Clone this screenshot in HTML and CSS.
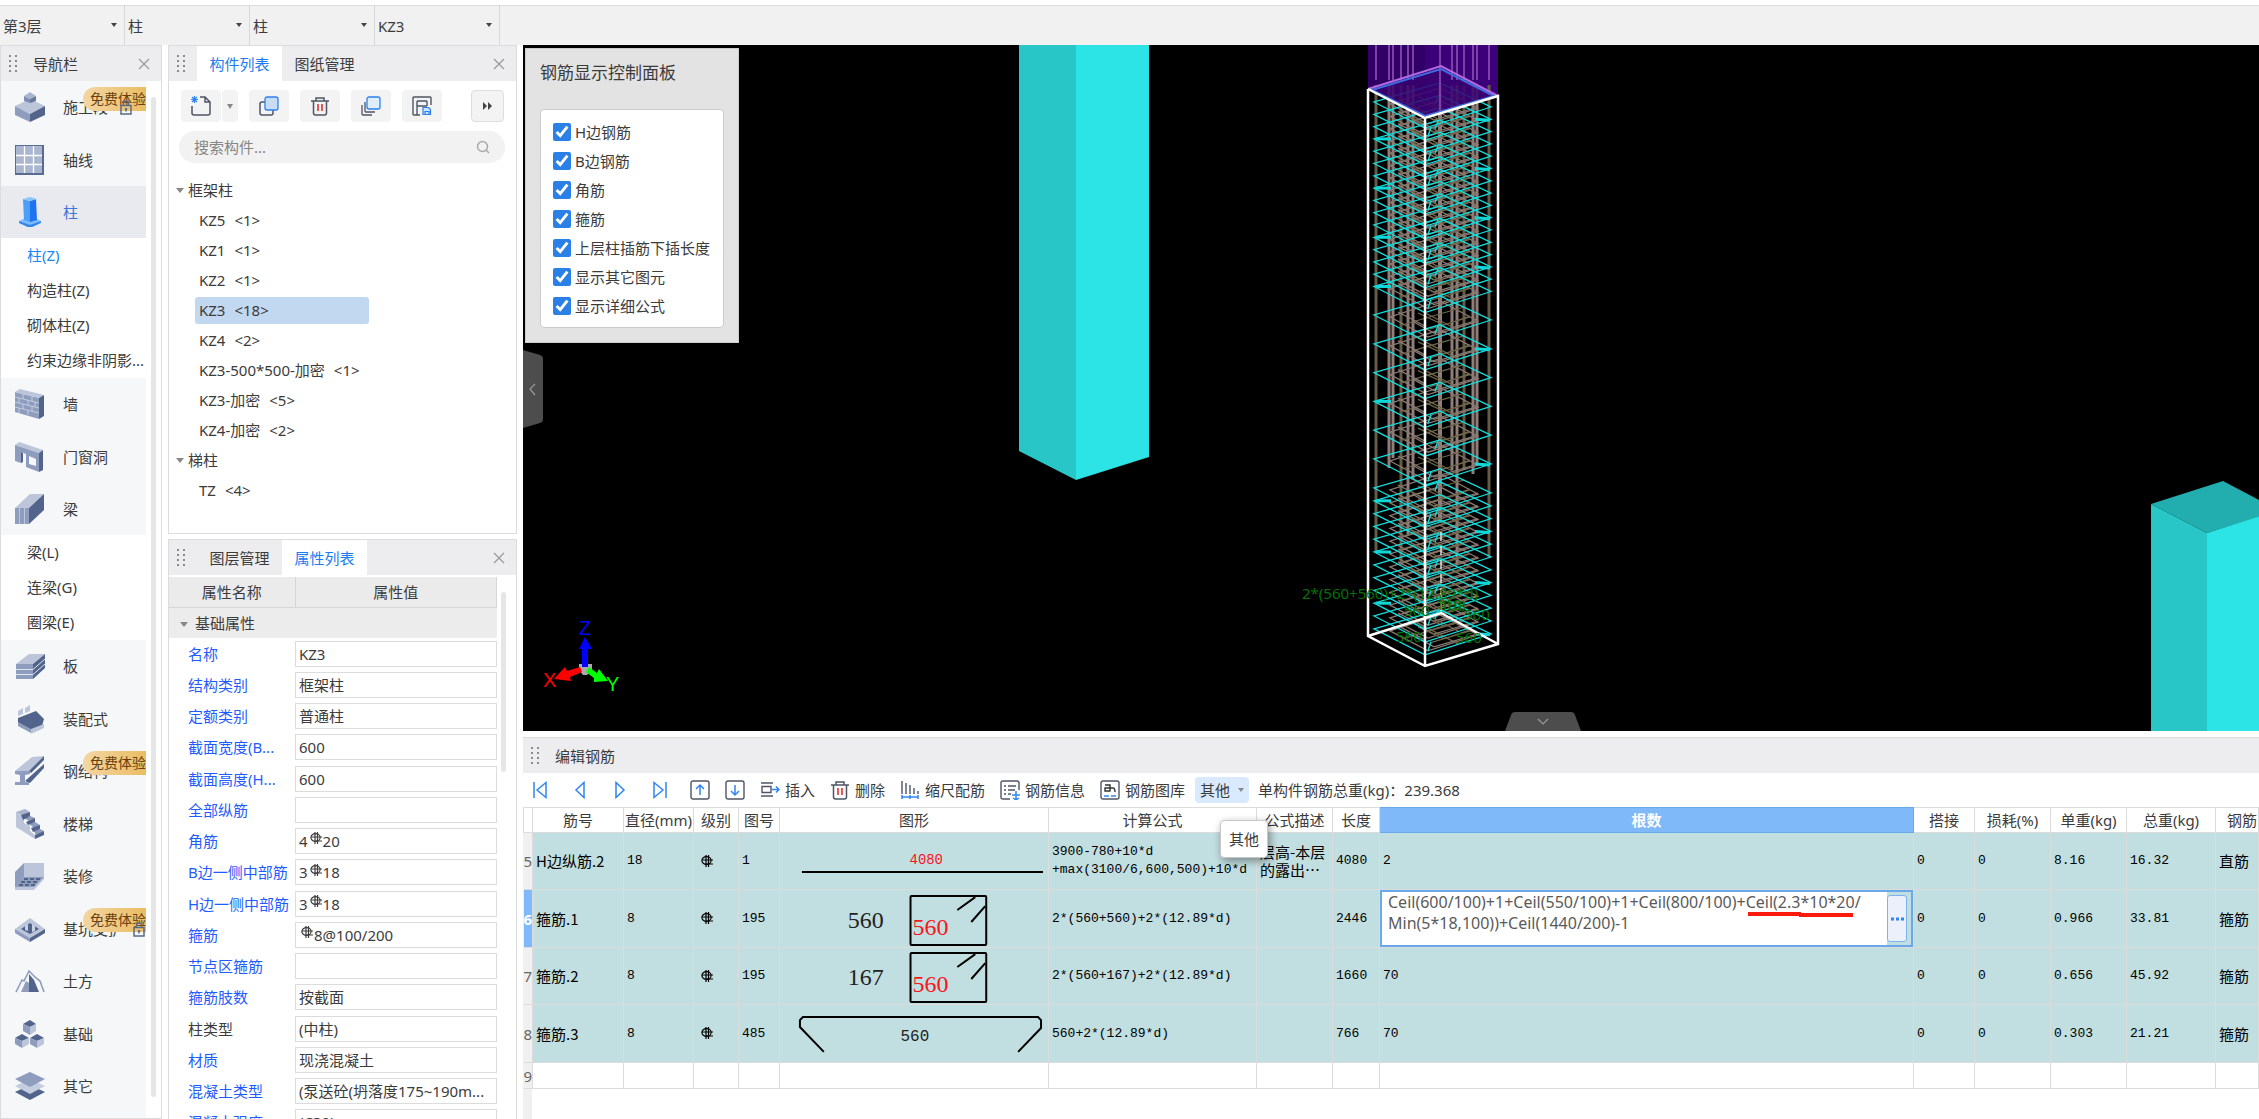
FILE: index.html
```html
<!DOCTYPE html>
<html lang="zh-CN">
<head>
    <meta charset="UTF-8">
    <meta name="viewport" content="width=device-width, initial-scale=1.0">
    <title>编辑钢筋</title>
    <link rel="stylesheet" href="styles.css">
</head>
<body>
    <!-- shared symbols -->
    <svg class="defs" width="0" height="0" aria-hidden="true">
        <symbol id="grip" viewBox="0 0 10 20">
            <path fill="#8a8a8a" d="M1 1h2v2H1zM7 1h2v2H7zM1 6h2v2H1zM7 6h2v2H7zM1 11h2v2H1zM7 11h2v2H7zM1 16h2v2H1zM7 16h2v2H7z"/>
        </symbol>
        <symbol id="close" viewBox="0 0 12 12">
            <path fill="none" stroke="#999" stroke-width="1.2" d="M1 1l10 10M11 1L1 11"/>
        </symbol>
        <symbol id="rebar" viewBox="0 0 12 13">
            <ellipse cx="5.500" cy="5.500" rx="4.600" ry="3.800" fill="none" stroke="currentColor" stroke-width="1.2"/>
            <path fill="none" stroke="currentColor" stroke-width="1.2" d="M5 0v12M7.500 0v12M1 5h11M5 9h7"/>
        </symbol>
        <symbol id="lock" viewBox="0 0 12 15">
            <path fill="none" stroke="#5a6b87" stroke-width="1.5" d="M1 5.500h10v8.500H1zM3.500 5V3a2.500 2 0 0 1 5 0v2M6 8v3.500M4.800 9h2.400"/>
        </symbol>
        <symbol id="trash" viewBox="0 0 20 20">
            <path fill="none" stroke="#4d5566" stroke-width="1.5" d="M1 5h18M6 5V2h8v3M3.500 5v12q0 2 2 2h9q2 0 2-2V5"/>
            <path stroke="#e43b3b" stroke-width="1.700" d="M8 8v7M12 8v7"/>
        </symbol>
        <symbol id="hook-box" viewBox="0 0 269 56">
            <g fill="none" stroke="#000" stroke-width="2" stroke-linejoin="round">
                <rect x="131" y="5" width="76" height="49" rx="1"/>
                <path d="M178 19l18-13M192 31l14-16"/>
            </g>
        </symbol>
    </svg>

    <div class="selectors">
        <div class="selector"><select aria-label="楼层"><option>第3层</option></select></div>
        <div class="selector"><select aria-label="构件大类"><option>柱</option></select></div>
        <div class="selector"><select aria-label="构件类型"><option>柱</option></select></div>
        <div class="selector"><select aria-label="构件"><option>KZ3</option></select></div>
    </div>

    <div class="workspace">
        <nav class="panel sidebar">
            <div class="panel-header">
                <svg class="grip"><use href="#grip"/></svg>
                <span class="panel-title">导航栏</span>
                <button class="close" aria-label="关闭"><svg><use href="#close"/></svg></button>
            </div>
            <div class="nav-body">
                <div class="nav-list">
                    <div class="nav-group">
                        <a class="nav-item" href="#">
                            <svg viewBox="0 0 30 30"><path fill="#bcc5da" d="M0 14l15-7 15 7-15 8z"/><path fill="#8e9cbe" d="M0 14l15 8v8L0 23z"/><path fill="#52648b" d="M30 14l-15 8v8l15-7z"/><path fill="#a9b5d0" d="M9 4l6-4 6 4-6 3z"/><path fill="#7f8fb5" d="M9 4l6 3v4L9 9z"/><path fill="#6878a0" d="M21 4l-6 3v4l6-2z"/></svg>
                            <span>施工段</span>
                            <em class="badge">免费体验</em>
                            <svg class="lock"><use href="#lock"/></svg>
                        </a>
                        <a class="nav-item" href="#">
                            <svg viewBox="0 0 30 30"><path fill="#5a6b93" d="M0 0h29v30H0z"/><path fill="#aab5cf" d="M1 1h26v27H1z"/><path fill="none" stroke="#fff" stroke-width="1.300" d="M9.500 1v27M18.500 1v27M1 10.500h26M1 19.500h26"/></svg>
                            <span>轴线</span>
                        </a>
                        <a class="nav-item active" href="#">
                            <svg viewBox="0 0 30 30"><path fill="#7dbcff" d="M4 24l11-5 11 5-11 5z"/><path fill="#2f86f0" d="M4 24l11 4 11-4v2l-11 5-11-5z"/><path fill="#4b9efa" d="M8 2l7 2v21l-6-2z"/><path fill="#1d74ee" d="M21 2l-6 2v21l7-2z"/><path fill="#8cc5ff" d="M8 2l7-2 7 2-7 2z"/></svg>
                            <span>柱</span>
                        </a>
                    </div>
                    <div class="nav-sub">
                        <a class="active" href="#">柱(Z)</a>
                        <a href="#">构造柱(Z)</a>
                        <a href="#">砌体柱(Z)</a>
                        <a href="#">约束边缘非阴影...</a>
                    </div>
                    <div class="nav-group">
                        <a class="nav-item" href="#">
                            <svg viewBox="0 0 30 30"><path fill="#8e9cbe" d="M0 3l24 6v21L0 23z"/><path fill="#bcc5da" d="M0 3l5-3 24 6-5 3z"/><path fill="#52648b" d="M29 6v21l-5 3V9z"/><path fill="none" stroke="#c3cbdd" stroke-width="1" d="M0 8l24 6M0 13l24 6M0 18l24 6M8 5v5M17 7v5M4 9v5M13 11v5M20 13v5M8 15v5M17 17v5M4 19v5M13 21v5"/></svg>
                            <span>墙</span>
                        </a>
                        <a class="nav-item" href="#">
                            <svg viewBox="0 0 30 30"><path fill="#bcc5da" d="M0 3l4-3 24 8-4 3z"/><path fill="#8e9cbe" fill-rule="evenodd" d="M0 3l24 8v19l-13-5V12l-5-2v11l-6-2zM14 14v8l7 2v-7z"/><path fill="#52648b" d="M28 8v20l-4 2V11zM6 10l2 1v9l-2 1z"/></svg>
                            <span>门窗洞</span>
                        </a>
                        <a class="nav-item" href="#">
                            <svg viewBox="0 0 30 30"><path fill="#bcc5da" d="M0 14L15 0h14L14 14z"/><path fill="#8e9cbe" d="M0 14h14v16H0z"/><path fill="#52648b" d="M29 0v16L14 30V14z"/><path stroke="#bcc5da" d="M4.500 14v16M9.500 14v16"/></svg>
                            <span>梁</span>
                        </a>
                    </div>
                    <div class="nav-sub">
                        <a href="#">梁(L)</a>
                        <a href="#">连梁(G)</a>
                        <a href="#">圈梁(E)</a>
                    </div>
                    <div class="nav-group">
                        <a class="nav-item" href="#">
                            <svg viewBox="0 0 30 30"><path fill="#bcc5da" d="M1 13L14 3h16L18 13z"/><path fill="#8e9cbe" d="M1 13h17v15H1z"/><path fill="#52648b" d="M30 3v14L18 28V13z"/><path fill="none" stroke="#dfe4ef" d="M1 18.500h17L30 8M1 23.500h17L30 13"/></svg>
                            <span>板</span>
                        </a>
                        <a class="nav-item" href="#">
                            <svg viewBox="0 0 30 30"><path fill="#52648b" d="M3 14l18-7 8 8-2 7-11 5-13-8z"/><path fill="#8e9cbe" d="M3 18l13 7v4L3 22z"/><path fill="#bcc5da" d="M16 25l13-5v4l-13 6zM3 7l5-3v6l-5 2zM10 4l5-3v6l-5 2z"/></svg>
                            <span>装配式</span>
                        </a>
                        <a class="nav-item" href="#">
                            <svg viewBox="0 0 30 30"><path fill="#bcc5da" d="M0 15L17 1l12-1-14 15z"/><path fill="#52648b" d="M29 0v4L16 17l-2-2zM10 25L29 8v4L15 27z"/><path fill="#8e9cbe" d="M0 15h15v3l-5 1v7h4v3H0v-3h5v-7l-5-1z"/></svg>
                            <span>钢结构</span>
                            <em class="badge">免费体验</em>
                        </a>
                        <a class="nav-item" href="#">
                            <svg viewBox="0 0 30 30"><path fill="#bcc5da" d="M1 3l8 6v5l6 3v5l5 4v4L1 18z"/><path fill="#a9b5d0" d="M1 3l9-3 5 3-8 4z"/><path fill="#8e9cbe" d="M9 9l6-2 5 2-6 3zM14 15l6-2 5 3-6 3zM19 22l6-2 4 2-8 4z"/><path fill="#52648b" d="M6 6l9-3v4L8 11zM11 13l9-4v4l-7 3zM16 19l9-3v4l-7 3zM20 26l9-4v4l-9 4z"/></svg>
                            <span>楼梯</span>
                        </a>
                        <a class="nav-item" href="#">
                            <svg viewBox="0 0 30 30"><path fill="#8e9cbe" d="M0 11l9-9v14L0 27z"/><path fill="#bcc5da" d="M9 2h20v14H9zM0 26h19L29 15v3L19 29H0z"/><path fill="#8e9cbe" d="M9 16h20L19 26H0z"/><path stroke="#3f5178" stroke-width="1.500" stroke-dasharray="4 2" d="M9 18h17M6 21h17M4 24h16"/></svg>
                            <span>装修</span>
                        </a>
                        <a class="nav-item" href="#">
                            <svg viewBox="0 0 30 30"><path fill="#bcc5da" d="M0 15L15 4l15 11-15 9z"/><path fill="#8e9cbe" d="M0 15l15 9v4L0 19z"/><path fill="#52648b" d="M30 15l-15 9v4l15-9zM6 15l9-6 9 6-9 5z"/><path fill="#c9d1e3" d="M10 12l3-2v7l-3-1zM17 10l3 2v5l-3 1z"/></svg>
                            <span>基坑支护</span>
                            <em class="badge">免费体验</em>
                            <svg class="lock lock-end"><use href="#lock"/></svg>
                        </a>
                        <a class="nav-item" href="#">
                            <svg viewBox="0 0 30 30"><path fill="#52648b" d="M14 8l5 6 5 12H14z"/><path fill="#8e9cbe" d="M6 26l5-11 3 2v9z"/><path fill="none" stroke="#8e9cbe" stroke-width="1.600" d="M1 26l6-12 2 1 5-10 7 7 4 3 4 11"/></svg>
                            <span>土方</span>
                        </a>
                        <a class="nav-item" href="#">
                            <svg viewBox="0 0 30 30"><path fill="#52648b" d="M8 5l7-4 6 4-6 3zM0 19l7-4 7 4-7 3zM15 19l7-4 7 4-7 3z"/><path fill="#8e9cbe" d="M8 5l7 3v8l-7-4zM0 19l7 3v7l-7-4zM15 19l7 3v7l-7-4z"/><path fill="#bcc5da" d="M21 5l-6 3v8l6-4zM14 19l-7 3v7l7-4zM29 19l-7 3v7l7-4z"/></svg>
                            <span>基础</span>
                        </a>
                        <a class="nav-item" href="#">
                            <svg viewBox="0 0 30 30"><path fill="#52648b" d="M0 21l15-7 15 7-15 8z"/><path fill="#c5cee0" d="M0 15l15-7 15 7-15 8z"/><path fill="#8e9cbe" d="M0 8l15-7 15 7-15 8z"/></svg>
                            <span>其它</span>
                        </a>
                    </div>
                </div>
                <div class="scrollbar"></div>
            </div>
        </nav>

        <div class="left-dock">
            <section class="panel">
                <div class="panel-header">
                    <svg class="grip"><use href="#grip"/></svg>
                    <div class="tabs">
                        <button class="tab active">构件列表</button>
                        <button class="tab">图纸管理</button>
                    </div>
                    <button class="close" aria-label="关闭"><svg><use href="#close"/></svg></button>
                </div>
                <div class="component-toolbar">
                    <div class="split">
                        <button aria-label="新建"><svg viewBox="0 0 20 20"><path fill="none" stroke="#4d5566" stroke-width="1.500" d="M9 1h5l5 5v11q0 2-2 2H3q-2 0-2-2v-7M14 1v5h5"/><path stroke="#2f86f0" stroke-width="1.200" d="M1 1l5 5M6 1L1 6M3.500 0v7M0 3.500h7"/></svg></button>
                        <button class="split-caret" aria-label="更多新建"><i class="caret"></i></button>
                    </div>
                    <button aria-label="复制"><svg viewBox="0 0 20 20"><rect x="1" y="6" width="13" height="13" rx="2" fill="none" stroke="#4d5566" stroke-width="1.500"/><rect x="6" y="1" width="13" height="13" rx="2" fill="#c8dcf8" stroke="#2f80ed" stroke-width="1.300"/></svg></button>
                    <button aria-label="删除"><svg><use href="#trash"/></svg></button>
                    <button aria-label="层间复制"><svg viewBox="0 0 20 20"><path fill="none" stroke="#4d5566" stroke-width="1.300" d="M4 6v9q0 1 1 1h9M1 9v9q0 1 1 1h9"/><rect x="6" y="1" width="13" height="12" rx="2" fill="#dfeeff" stroke="#2f80ed" stroke-width="1.300"/></svg></button>
                    <button aria-label="存档"><svg viewBox="0 0 20 20"><path fill="none" stroke="#4d5566" stroke-width="1.400" d="M8 19H2q-1 0-1-1V2q0-1 1-1h16q1 0 1 1v7M5 19V5M5 5h10M5 10h10M15 5v5"/><path fill="#cfe3ff" stroke="#2f80ed" stroke-width="1.200" d="M11 11.500h5.500l2 2v5H11zM13 18.500v-3h4v3"/></svg></button>
                    <button class="more" aria-label="更多"><svg viewBox="0 0 10 10"><path fill="#444" d="M0 1l4 4-4 4zM5 1l4 4-4 4z"/></svg></button>
                </div>
                <div class="search">
                    <input type="text" placeholder="搜索构件..." aria-label="搜索构件">
                    <svg viewBox="0 0 14 14"><circle cx="6.500" cy="6.500" r="5" fill="none" stroke="#aaa" stroke-width="1.500"/><path stroke="#aaa" stroke-width="1.500" d="M10 10l3 3"/></svg>
                </div>
                <ul class="tree">
                    <li class="tree-group"><i class="caret"></i>框架柱</li>
                    <li><a href="#">KZ5<span>&lt;1&gt;</span></a></li>
                    <li><a href="#">KZ1<span>&lt;1&gt;</span></a></li>
                    <li><a href="#">KZ2<span>&lt;1&gt;</span></a></li>
                    <li><a class="selected" href="#">KZ3<span>&lt;18&gt;</span></a></li>
                    <li><a href="#">KZ4<span>&lt;2&gt;</span></a></li>
                    <li><a href="#">KZ3-500*500-加密<span>&lt;1&gt;</span></a></li>
                    <li><a href="#">KZ3-加密<span>&lt;5&gt;</span></a></li>
                    <li><a href="#">KZ4-加密<span>&lt;2&gt;</span></a></li>
                    <li class="tree-group"><i class="caret"></i>梯柱</li>
                    <li><a href="#">TZ<span>&lt;4&gt;</span></a></li>
                </ul>
            </section>

            <section class="panel properties">
                <div class="panel-header">
                    <svg class="grip"><use href="#grip"/></svg>
                    <div class="tabs">
                        <button class="tab">图层管理</button>
                        <button class="tab active">属性列表</button>
                    </div>
                    <button class="close" aria-label="关闭"><svg><use href="#close"/></svg></button>
                </div>
                <div class="property-body">
                    <div class="property-scroll">
                        <table class="property-table">
                            <thead>
                                <tr><th class="name-col">属性名称</th><th>属性值</th></tr>
                                <tr class="group-row"><td colspan="2"><i class="caret"></i>基础属性</td></tr>
                            </thead>
                            <tbody>
                                <tr><td><label for="p1">名称</label></td><td><div class="field"><input id="p1" value="KZ3"></div></td></tr>
                                <tr><td><label for="p2">结构类别</label></td><td><div class="field"><input id="p2" value="框架柱"></div></td></tr>
                                <tr><td><label for="p3">定额类别</label></td><td><div class="field"><input id="p3" value="普通柱"></div></td></tr>
                                <tr><td><label for="p4">截面宽度(B...</label></td><td><div class="field"><input id="p4" value="600"></div></td></tr>
                                <tr><td><label for="p5">截面高度(H...</label></td><td><div class="field"><input id="p5" value="600"></div></td></tr>
                                <tr><td><label for="p6">全部纵筋</label></td><td><div class="field"><input id="p6" value=""></div></td></tr>
                                <tr><td><label for="p7">角筋</label></td><td><div class="field">4<svg class="rebar"><use href="#rebar"/></svg><input id="p7" value="20"></div></td></tr>
                                <tr><td><label for="p8">B边一侧中部筋</label></td><td><div class="field">3<svg class="rebar"><use href="#rebar"/></svg><input id="p8" value="18"></div></td></tr>
                                <tr><td><label for="p9">H边一侧中部筋</label></td><td><div class="field">3<svg class="rebar"><use href="#rebar"/></svg><input id="p9" value="18"></div></td></tr>
                                <tr><td><label for="p10">箍筋</label></td><td><div class="field"><svg class="rebar"><use href="#rebar"/></svg><input id="p10" value="8@100/200"></div></td></tr>
                                <tr><td><label for="p11">节点区箍筋</label></td><td><div class="field"><input id="p11" value=""></div></td></tr>
                                <tr><td><label for="p12">箍筋肢数</label></td><td><div class="field"><input id="p12" value="按截面"></div></td></tr>
                                <tr><td><label class="plain" for="p13">柱类型</label></td><td><div class="field"><input id="p13" value="(中柱)"></div></td></tr>
                                <tr><td><label for="p14">材质</label></td><td><div class="field"><input id="p14" value="现浇混凝土"></div></td></tr>
                                <tr><td><label for="p15">混凝土类型</label></td><td><div class="field"><input id="p15" value="(泵送砼(坍落度175~190m..."></div></td></tr>
                                <tr><td><label for="p16">混凝土强度...</label></td><td><div class="field"><input id="p16" value="(C30)"></div></td></tr>
                            </tbody>
                        </table>
                    </div>
                    <div class="scrollbar"></div>
                </div>
            </section>
        </div>

        <main class="main">
            <div class="viewport">
                <svg class="scene" viewBox="523 45 1736 686" preserveAspectRatio="xMidYMid slice">
                    <!-- neighbouring columns -->
                    <path fill="#29c6c8" d="M1019 45h57v435l-57-29z"/>
                    <path fill="#2ce4e5" d="M1076 45h73v412l-73 23z"/>
                    <path fill="#22adae" d="M2151 504l72-23 57 30-73 22z"/>
                    <path fill="#29c6c8" d="M2151 504l56 29v200h-56z"/>
                    <path fill="#2ce4e5" d="M2207 533l73-23v223h-73z"/>

                    <!-- selected column with its rebar -->
                    <path fill="#310066" d="M1368 45h57v73l-57-29z"/>
                    <path fill="#3c0078" d="M1425 45h73v51l-73 22z"/>
                    <g id="rebars"></g>
                    <path fill="#37006f" fill-opacity=".85" d="M1368 89l73-23 57 30-73 22z"/>
                    <g id="upperBars"></g>
                    <path fill="none" stroke="#3f6be0" stroke-width="2" d="M1372 90l69-21 53 27-69 20z"/>
                    <path fill="none" stroke="#b06be0" stroke-width="2" d="M1368 89l73-23 57 30"/>
                    <path fill="none" stroke="#fff" stroke-width="2.500" d="M1368 89v547l57 30 73-22V96l-73 22-57-29M1425 118v548M1368 636l73-23 57 31"/>
                    <path stroke="#ddd" stroke-width="1.500" stroke-dasharray="9 5" d="M1441 532v81"/>
                    <g class="dimensions">
                        <text x="1302" y="599">2*(560+560)+2*(12.89*d)</text>
                        <text x="1404" y="616">560</text>
                        <text x="1464" y="620">560</text>
                        <text x="1396" y="642">560</text>
                        <text x="1456" y="643">560</text>
                        <text x="1436" y="610">110</text>
                        <text x="1440" y="611">108</text>
                    </g>

                    <!-- axes -->
                    <path fill="#aaa" d="M579 664h13v6l-5 5h-4l-4-5z"/>
                    <path fill="#00f" d="M585 637l7 12h-4v18h-6v-18h-3z"/>
                    <path fill="#f00" d="M554 679l11-12 2 4 13-4 2 5-12 5 1 4z"/>
                    <path fill="#0f0" d="M608 681l-14 1v-4l-8-6 3-5 8 6 2-4z"/>
                    <g class="axis">
                        <text x="579" y="635" fill="#00f">Z</text>
                        <text x="543" y="687" fill="#f00">X</text>
                        <text x="606" y="691" fill="#0f0">Y</text>
                    </g>
                </svg>

                <fieldset class="display-panel">
                    <legend>钢筋显示控制面板</legend>
                    <div class="display-options">
                        <label><input type="checkbox" checked>H边钢筋</label>
                        <label><input type="checkbox" checked>B边钢筋</label>
                        <label><input type="checkbox" checked>角筋</label>
                        <label><input type="checkbox" checked>箍筋</label>
                        <label><input type="checkbox" checked>上层柱插筋下插长度</label>
                        <label><input type="checkbox" checked>显示其它图元</label>
                        <label><input type="checkbox" checked>显示详细公式</label>
                    </div>
                </fieldset>
                <button class="handle handle-left" aria-label="收起左侧"><svg viewBox="0 0 20 78"><path fill="#4d4d4d" d="M0 0l17 5q3 1 3 4v60q0 3-3 4L0 78z"/><path fill="none" stroke="#999" stroke-width="1.200" d="M12 34l-5 5 5 6"/></svg></button>
                <button class="handle handle-bottom" aria-label="收起底部"><svg viewBox="0 0 76 19"><path fill="#4d4d4d" d="M0 19L6 3q1-3 4-3h56q3 0 4 3l6 16z"/><path fill="none" stroke="#999" stroke-width="1.200" d="M33 7l5 5 5-5"/></svg></button>
            </div>

            <section class="rebar-panel">
                <div class="panel-header">
                    <svg class="grip"><use href="#grip"/></svg>
                    <span class="panel-title">编辑钢筋</span>
                </div>
                <div class="rebar-toolbar">
                    <button class="step" aria-label="首行"><svg viewBox="0 0 20 20"><path d="M4 2v16M16 2.500v15L7 10z"/></svg></button>
                    <button class="step" aria-label="上一行"><svg viewBox="0 0 20 20"><path d="M14 2.500v15L6 10z"/></svg></button>
                    <button class="step" aria-label="下一行"><svg viewBox="0 0 20 20"><path d="M6 2.500v15L14 10z"/></svg></button>
                    <button class="step" aria-label="末行"><svg viewBox="0 0 20 20"><path d="M16 2v16M4 2.500v15L13 10z"/></svg></button>
                    <button aria-label="上移"><svg viewBox="0 0 20 20"><rect x="1" y="1" width="18" height="18" rx="2" fill="none" stroke="#4d5566" stroke-width="1.400"/><path d="M10 15V5M6 9l4-4 4 4"/></svg></button>
                    <button aria-label="下移"><svg viewBox="0 0 20 20"><rect x="1" y="1" width="18" height="18" rx="2" fill="none" stroke="#4d5566" stroke-width="1.400"/><path d="M10 5v10M6 11l4 4 4-4"/></svg></button>
                    <button><svg viewBox="0 0 20 20"><path fill="none" stroke="#4d5566" stroke-width="1.400" d="M1 3h12M1 16h12M2 6.500h9v6H2z"/><path d="M12 9.500h7M16 6.500l3 3-3 3"/></svg>插入</button>
                    <button><svg viewBox="0 0 20 20"><use href="#trash"/></svg>删除</button>
                    <button><svg viewBox="0 0 20 20"><path fill="none" stroke="#4d5566" stroke-width="1.400" d="M2 1v13M6 3v11M10 5v9M14 8v6M18 11v3"/><path d="M2 17h16M2 15v4M10 15v4M18 15v4"/></svg>缩尺配筋</button>
                    <button><svg viewBox="0 0 20 20"><path fill="none" stroke="#4d5566" stroke-width="1.400" d="M10 19H3q-2 0-2-2V3q0-2 2-2h14q2 0 2 2v7M4 6h2M8 6h8M4 10h2M8 10h7M4 14h2M8 14h3"/><path d="M16 11v8M12 15h8M13 18l3 2 3-2"/></svg>钢筋信息</button>
                    <button><svg viewBox="0 0 20 20"><rect x="1" y="1" width="18" height="18" rx="2" fill="none" stroke="#4d5566" stroke-width="1.400"/><path fill="none" stroke="#333" stroke-width="1.400" d="M5 5h5v6H5V8h5M10 8h3q2 0 2 4"/><path d="M4 16h5M11 16h5"/></svg>钢筋图库</button>
                    <button class="other" aria-describedby="tip">其他<i class="caret"></i></button>
                    <span class="total">单构件钢筋总重(kg)：239.368</span>
                    <div class="tooltip" id="tip" role="tooltip">其他</div>
                </div>
                <div class="table-wrap">
                    <table class="rebar-table">
                        <colgroup>
                            <col class="c-row"><col class="c-name"><col class="c-dia"><col class="c-grade"><col class="c-no"><col class="c-shape"><col class="c-formula"><col class="c-desc"><col class="c-len"><col><col class="c-lap"><col class="c-loss"><col class="c-unit"><col class="c-sum"><col class="c-type">
                        </colgroup>
                        <thead>
                            <tr><th></th><th>筋号</th><th>直径(mm)</th><th>级别</th><th>图号</th><th>图形</th><th>计算公式</th><th>公式描述</th><th>长度</th><th class="current">根数</th><th>搭接</th><th>损耗(%)</th><th>单重(kg)</th><th>总重(kg)</th><th class="cut">钢筋</th></tr>
                        </thead>
                        <tbody>
                            <tr>
                                <th>5</th><td class="cjk">H边纵筋.2</td><td>18</td><td><svg class="rebar"><use href="#rebar"/></svg></td><td>1</td>
                                <td class="shape"><svg viewBox="0 0 269 56"><text x="130" y="31" class="small red">4080</text><path stroke="#000" stroke-width="2" d="M22 39h242"/></svg></td>
                                <td>3900-780+10*d<br>+max(3100/6,600,500)+10*d</td><td class="cjk">层高-本层<br>的露出…</td><td>4080</td><td>2</td><td>0</td><td>0</td><td>8.16</td><td>16.32</td><td class="cjk">直筋</td>
                            </tr>
                            <tr class="current">
                                <th>6</th><td class="cjk">箍筋.1</td><td>8</td><td><svg class="rebar"><use href="#rebar"/></svg></td><td>195</td>
                                <td class="shape"><svg viewBox="0 0 269 56"><text x="68" y="37">560</text><use href="#hook-box"/><text x="133" y="44" class="red">560</text></svg></td>
                                <td>2*(560+560)+2*(12.89*d)</td><td></td><td>2446</td>
                                <td class="editing">
                                    <div class="editor">
                                        <textarea aria-label="根数">Ceil(600/100)+1+Ceil(550/100)+1+Ceil(800/100)+Ceil(2.3*10*20/
Min(5*18,100))+Ceil(1440/200)-1</textarea>
                                        <button aria-label="展开"><svg viewBox="0 0 18 6"><path fill="#2f86f0" d="M3 1.500h3v3H3zM8 1.500h3v3H8zM13 1.500h3v3h-3z"/></svg></button>
                                        <svg class="mark" viewBox="0 0 106 6"><path stroke="#fb1b0c" stroke-width="4" d="M0 2h53M51 3h54"/></svg>
                                    </div>
                                </td>
                                <td>0</td><td>0</td><td>0.966</td><td>33.81</td><td class="cjk">箍筋</td>
                            </tr>
                            <tr>
                                <th>7</th><td class="cjk">箍筋.2</td><td>8</td><td><svg class="rebar"><use href="#rebar"/></svg></td><td>195</td>
                                <td class="shape"><svg viewBox="0 0 269 56"><text x="68" y="37">167</text><use href="#hook-box"/><text x="133" y="44" class="red">560</text></svg></td>
                                <td>2*(560+167)+2*(12.89*d)</td><td></td><td>1660</td><td>70</td><td>0</td><td>0</td><td>0.656</td><td>45.92</td><td class="cjk">箍筋</td>
                            </tr>
                            <tr>
                                <th>8</th><td class="cjk">箍筋.3</td><td>8</td><td><svg class="rebar"><use href="#rebar"/></svg></td><td>485</td>
                                <td class="shape"><svg viewBox="0 0 269 56"><path fill="none" stroke="#000" stroke-width="2" d="M44 46L20 21v-7l3-3h236l3 3v8l-23 24"/><text x="121" y="35" class="medium">560</text></svg></td>
                                <td>560+2*(12.89*d)</td><td></td><td>766</td><td>70</td><td>0</td><td>0</td><td>0.303</td><td>21.21</td><td class="cjk">箍筋</td>
                            </tr>
                            <tr class="empty">
                                <th>9</th><td></td><td></td><td></td><td></td><td></td><td></td><td></td><td></td><td></td><td></td><td></td><td></td><td></td><td></td>
                            </tr>
                        </tbody>
                    </table>
                </div>
            </section>
        </main>
    </div>

    <script src="script.js"></script>
</body>
</html>
```

FILE: styles.css
```css
* {
    box-sizing: border-box;
}
body {
    margin: 0;
    height: 100vh;
    padding-top: 5px;
    display: flex;
    flex-direction: column;
    overflow: hidden;
    background: #fff;
    color: #3c3c3c;
    font-family: "Noto Sans", "Noto Sans CJK SC", sans-serif;
    font-size: 15px;
    line-height: 20px;
}
button, input, select, textarea {
    font: inherit;
    color: inherit;
    margin: 0;
    padding: 0;
    border: 0;
    background: none;
}
a {
    color: inherit;
    text-decoration: none;
}
.defs {
    position: absolute;
}
.caret {
    border: 4px solid transparent;
    border-top: 5px solid #888;
    border-bottom: 0;
}

/* top drop-downs */
.selectors {
    display: flex;
    height: 40px;
    flex: none;
    background: #f1f1f1;
    border-top: 1px solid #ddd;
}
.selector {
    position: relative;
    width: 125px;
    border-right: 1px solid #d8d8d8;
}
.selector select {
    width: 100%;
    height: 100%;
    padding-left: 3px;
    appearance: none;
}
.selector::after {
    content: "";
    position: absolute;
    right: 7px;
    top: 17px;
    border: 3px solid transparent;
    border-top: 4px solid #444;
    border-bottom: 0;
    pointer-events: none;
}

.workspace {
    flex: 1;
    min-height: 0;
    display: flex;
    gap: 6px;
}

/* panels */
.panel {
    border: 1px solid #dcdcdc;
    overflow: hidden;
}
.panel-header {
    display: flex;
    align-items: center;
    height: 35px;
    flex: none;
    background: #ededf0;
}
.grip {
    width: 10px;
    height: 20px;
    margin-left: 7px;
}
.panel-title {
    margin-left: 15px;
}
.close {
    margin-left: auto;
    margin-right: 11px;
    display: flex;
}
.close svg {
    width: 12px;
    height: 12px;
}
.tabs {
    display: flex;
    height: 100%;
    margin-left: 11px;
}
.tab {
    width: 85px;
}
.tab.active {
    background: #fff;
    color: #1a7cf0;
}
.scrollbar {
    flex: none;
    width: 5px;
    border-radius: 3px;
    background: #e6e6e6;
}

/* navigation */
.sidebar {
    width: 162px;
    flex: none;
    display: flex;
    flex-direction: column;
}
.nav-body {
    display: flex;
    flex: 1;
    min-height: 0;
}
.nav-body .scrollbar {
    margin: 16px 5px 21px;
}
.nav-list {
    flex: 1;
    background: #f5f7f9;
}
.nav-item {
    position: relative;
    display: flex;
    align-items: center;
    gap: 18px;
    height: 52px;
    padding-left: 14px;
    white-space: nowrap;
}
.nav-item:nth-child(even) {
    height: 53px;
}
.nav-item > svg {
    width: 30px;
    height: 30px;
    flex: none;
}
.nav-item.active {
    background: #e9eaef;
    color: #3f74d8;
}
.badge {
    position: absolute;
    right: 0;
    top: 6px;
    height: 24px;
    width: 63px;
    padding-left: 7px;
    border-radius: 12px 0 0 12px;
    background: linear-gradient(90deg, #f3d6a3, #eabd63);
    color: #6b4010;
    font-size: 14px;
    font-style: normal;
    line-height: 24px;
    overflow: hidden;
}
.nav-item > .lock {
    position: absolute;
    right: 14px;
    bottom: 18px;
    width: 12px;
    height: 15px;
}
.nav-item > .lock-end {
    right: 1px;
}
.nav-sub {
    background: #fff;
}
.nav-sub a {
    display: block;
    height: 35px;
    padding-left: 26px;
    line-height: 35px;
    white-space: nowrap;
    overflow: hidden;
}
.nav-sub .active {
    color: #1a86f5;
}

/* component list */
.left-dock {
    width: 349px;
    flex: none;
    display: flex;
    flex-direction: column;
    gap: 5px;
}
.component-toolbar {
    display: flex;
    gap: 11px;
    padding: 9px 12px;
}
.component-toolbar button {
    display: flex;
    align-items: center;
    justify-content: center;
    width: 40px;
    height: 32px;
    border-radius: 4px;
    background: #f3f3f3;
}
.component-toolbar svg {
    width: 20px;
    height: 20px;
}
.split {
    display: flex;
    gap: 1px;
}
.component-toolbar .split-caret {
    width: 16px;
}
.component-toolbar .more {
    width: 33px;
    margin-left: auto;
    border: 1px solid #ddd;
}
.component-toolbar .more svg {
    width: 10px;
    height: 10px;
}
.split-caret .caret {
    border-width: 5px 3px 0;
}
.search {
    display: flex;
    align-items: center;
    height: 32px;
    margin: 0 11px 12px 10px;
    padding: 0 15px;
    border-radius: 16px;
    background: #f2f2f2;
}
.search input {
    flex: 1;
    min-width: 0;
    outline: 0;
}
.search input::placeholder {
    color: #858585;
}
.search svg {
    width: 14px;
    height: 14px;
}
.tree {
    list-style: none;
    margin: 0;
    padding: 0 0 28px 7px;
}
.tree li {
    display: flex;
    align-items: center;
    height: 30px;
}
.tree-group .caret {
    margin-right: 4px;
}
.tree a {
    width: 174px;
    height: 27px;
    margin-left: 19px;
    padding-left: 4px;
    border-radius: 3px;
    line-height: 27px;
}
.tree a.selected {
    background: #c2d8f0;
}
.tree span {
    margin-left: 9px;
}

/* properties */
.properties {
    flex: 1;
    min-height: 0;
    border-bottom: 0;
}
.property-body {
    display: flex;
    padding-top: 2px;
}
.property-body .scrollbar {
    height: 180px;
    margin: 15px 10px 0 4px;
}
.property-scroll {
    flex: 1;
    min-width: 0;
}
.property-table {
    width: 100%;
    table-layout: fixed;
    border-collapse: collapse;
}
.property-table th {
    height: 30px;
    padding: 0;
    background: #ebebeb;
    border: 1px solid #d6d6d6;
    border-width: 0 1px 1px 0;
    font-weight: normal;
}
.property-table .name-col {
    width: 126px;
}
.group-row td {
    height: 31px;
    padding: 0 0 0 11px;
    background: #ececec;
}
.group-row .caret {
    display: inline-block;
    margin-right: 7px;
    vertical-align: middle;
}
.property-table tbody td {
    height: 31px;
    padding: 0;
    white-space: nowrap;
}
.property-table tbody tr:nth-child(4n) td {
    height: 32px;
}
.property-table label {
    padding-left: 19px;
    color: #1f5cff;
}
.property-table label.plain {
    color: #3c3c3c;
}
.field {
    display: flex;
    align-items: center;
    height: 26px;
    padding-left: 3px;
    border: 1px solid #dcdcdc;
}
.field input {
    flex: 1;
    min-width: 0;
}
.field .rebar {
    flex: none;
    margin: 0 1px 4px 2px;
}
.rebar {
    width: 12px;
    height: 13px;
    display: block;
}

/* 3D view */
.main {
    flex: 1;
    min-width: 0;
    display: flex;
    flex-direction: column;
    gap: 6px;
}
.viewport {
    position: relative;
    flex: 1;
    min-height: 0;
    background: #000;
}
.scene {
    display: block;
    width: 100%;
    height: 100%;
}
.dimensions {
    fill: #067006;
    font-size: 15px;
}
.axis {
    font-family: "Liberation Sans", sans-serif;
    font-size: 20px;
}
.display-panel {
    position: absolute;
    left: 2px;
    top: 3px;
    margin: 0;
    padding: 14px;
    border: 1px solid #ccc;
    background: #e3e3e3;
}
.display-panel legend {
    float: left;
    padding: 0;
    font-size: 17px;
    margin-bottom: 26px;
}
.display-options {
    clear: both;
    width: 184px;
    padding: 7px 12px;
    border: 1px solid #ccc;
    border-radius: 4px;
    background: #fff;
}
.display-options label {
    display: flex;
    align-items: center;
    gap: 4px;
    height: 29px;
    white-space: nowrap;
}
.display-options input {
    width: 18px;
    height: 18px;
    flex: none;
    accent-color: #2b80e8;
}
.handle {
    position: absolute;
}
.handle svg {
    display: block;
    width: 100%;
    height: 100%;
}
.handle-left {
    left: 0;
    top: 305px;
    width: 20px;
    height: 78px;
}
.handle-bottom {
    left: calc(59% - 42px);
    bottom: 0;
    width: 76px;
    height: 19px;
}

/* rebar editor */
.rebar-panel {
    flex: 0 0 382px;
    display: flex;
    flex-direction: column;
    border-top: 1px solid #dcdcdc;
}
.rebar-toolbar {
    position: relative;
    display: flex;
    align-items: center;
    height: 34px;
    padding-left: 7px;
    white-space: nowrap;
}
.rebar-toolbar button {
    display: flex;
    align-items: center;
    gap: 5px;
    height: 26px;
    margin-right: 15px;
}
.rebar-toolbar svg {
    width: 20px;
    height: 20px;
    stroke: #2f86f0;
    stroke-width: 1.5px;
    fill: none;
}
.rebar-toolbar .step {
    margin-right: 20px;
}
.rebar-toolbar .other {
    margin-left: -5px;
    margin-right: 9px;
    padding: 0 5px;
    gap: 8px;
    border-radius: 4px;
    background: #d9eaff;
}
.other .caret {
    border-width: 4px 3px 0;
}
.tooltip {
    position: absolute;
    left: 697px;
    top: 47px;
    z-index: 2;
    padding: 8px 8px;
    border: 1px solid #c8c8c8;
    border-radius: 4px;
    background: #fff;
    box-shadow: 2px 3px 8px rgba(0, 0, 0, 0.4);
}
.table-wrap {
    flex: 1;
    overflow: hidden;
    background: linear-gradient(90deg, #f0f0f0 9px, #fff 9px);
}
.rebar-table {
    width: 100%;
    table-layout: fixed;
    border-collapse: collapse;
}
.c-row { width: 9px; }
.c-name { width: 91px; }
.c-dia { width: 70px; }
.c-grade { width: 45px; }
.c-no { width: 41px; }
.c-shape { width: 269px; }
.c-formula { width: 208px; }
.c-desc { width: 76px; }
.c-len { width: 47px; }
.c-lap { width: 61px; }
.c-loss { width: 76px; }
.c-unit { width: 76px; }
.c-sum { width: 89px; }
.c-type { width: 43px; }
.rebar-table th, .rebar-table td {
    padding: 0;
    border: 1px solid #dcdcdc;
    white-space: nowrap;
}
.rebar-table thead th {
    height: 25px;
    background: #fff;
    font-weight: normal;
}
.rebar-table thead .current {
    background: #80b9fa;
    border-color: #6aa9e9;
    color: #fff;
    font-weight: bold;
}
.rebar-table thead .cut {
    padding-left: 10px;
}
.rebar-table tbody th {
    border-left: 0;
    background: #f0f0f0;
    color: #666;
    font-weight: normal;
}
.rebar-table tbody .current th {
    background: #80b9fa;
    color: #fff;
    font-weight: bold;
}
.rebar-table td {
    height: 57px;
    padding-left: 3px;
    background: #c1dee0;
    color: #000;
    font-family: "Liberation Mono", "Noto Sans CJK SC", monospace;
    font-size: 13px;
    line-height: 18px;
}
.rebar-table tr:nth-child(even) td {
    height: 58px;
}
.rebar-table .cjk {
    font-family: "Noto Sans CJK SC", sans-serif;
    font-size: 15px;
}
.rebar-table td .rebar {
    margin-left: 4px;
}
.rebar-table .empty td {
    height: 26px;
    background: #fff;
}
.rebar-table .shape {
    padding: 0;
}
.shape svg {
    display: block;
    width: 100%;
    height: 56px;
}
.shape text {
    font-family: "Liberation Serif", serif;
    font-size: 24px;
    fill: #222;
}
.shape .small {
    font-family: "Liberation Mono", monospace;
    font-size: 14px;
}
.shape .medium {
    font-family: "Liberation Mono", monospace;
    font-size: 16px;
}
.shape .red {
    fill: #f8151b;
}
.rebar-table .editing {
    padding: 0;
}
.editor {
    position: relative;
    display: flex;
    height: 57px;
    border: 2px solid #6aa9e9;
}
.editor textarea {
    flex: 1;
    min-width: 0;
    padding: 0 6px;
    background: #fff;
    color: #5a5a5a;
    font-family: "Noto Sans", sans-serif;
    font-size: 16px;
    line-height: 21px;
    resize: none;
    overflow: hidden;
    white-space: pre;
}
.editor button {
    width: 20px;
    margin: 3px 4px 3px 0;
    border: 1px solid #7db3ee;
    border-radius: 3px;
    background: #ecf0fa;
}
.editor button svg {
    display: block;
    width: 18px;
    height: 6px;
}
.mark {
    position: absolute;
    left: 366px;
    top: 20px;
    width: 106px;
    height: 6px;
}
```

FILE: script.js
```js
var NS = "http://www.w3.org/2000/svg";

function addPath(parent, d, color, width) {
    var path = document.createElementNS(NS, "path");
    path.setAttribute("d", d);
    path.setAttribute("fill", "none");
    path.setAttribute("stroke", color);
    path.setAttribute("stroke-width", width);
    parent.appendChild(path);
}

// longitudinal bars: x, bottom y, color, width
var bars = [
    [1376, 552, "#645c45", 3], [1389, 468, "#907f78", 3], [1393, 458, "#907f78", 3],
    [1401, 565, "#645c45", 3], [1408, 535, "#907f78", 3], [1413, 480, "#907f78", 3],
    [1440, 520, "#907f78", 4], [1452, 470, "#907f78", 3], [1457, 565, "#907f78", 3],
    [1464, 470, "#645c45", 3], [1473, 474, "#907f78", 3], [1477, 463, "#907f78", 3],
    [1489, 558, "#645c45", 3]
];

// stirrup levels: dense at both ends, sparse in the middle
var levels = [];
var i;
for (i = 0; i < 16; i++) levels.push(102 + i * 12.3);
for (i = 0; i < 6; i++) levels.push(315 + i * 28.8);
for (i = 0; i < 12; i++) levels.push(488 + i * 12.8);

var rebars = document.getElementById("rebars");
var upper = document.getElementById("upperBars");

bars.forEach(function(bar) {
    addPath(rebars, "M" + bar[0] + " 85V" + bar[1], bar[2], bar[3]);
    addPath(upper, "M" + bar[0] + " 45V" + (bar[0] === 1440 ? 112 : 80), "#7c40a8", 2);
});

// inner ties
levels.forEach(function(y) {
    addPath(rebars, "M1390 " + (y + 2) + "l38 20 50-16-38-20z", "#8a7a73", 1.3);
    addPath(rebars, "M1402 " + (y + 10) + "l62-18M1408 " + (y - 11) + "l50 26", "#6e654a", 1.3);
    addPath(rebars, "M1412 " + (y + 6) + "l22 12 44-13M1398 " + (y - 3) + "l27 14", "#8a7a73", 1.3);
    addPath(rebars, "M1418 " + (y - 2) + "l26 12 26-9M1430 " + (y + 14) + "l40-12", "#6e654a", 1.3);
});

// outer stirrups with their hooks
levels.forEach(function(y, n) {
    addPath(rebars, "M1374 " + y + "l51 26 66-21-51-24z", "#10e0e0", 1.3);
    if (n % 4 === 3) addPath(rebars, "M1376 " + y + "h15", "#10d8d8", 3);
    if (n % 4 === 1) addPath(rebars, "M1475 " + (y + 5) + "l15 1", "#10d8d8", 3);
    if (n % 2) addPath(rebars, "M1428 " + (y + 22) + "l3-9M1435 " + (y - 10) + "l3-8", "#10d8d8", 1.5);
});
```
